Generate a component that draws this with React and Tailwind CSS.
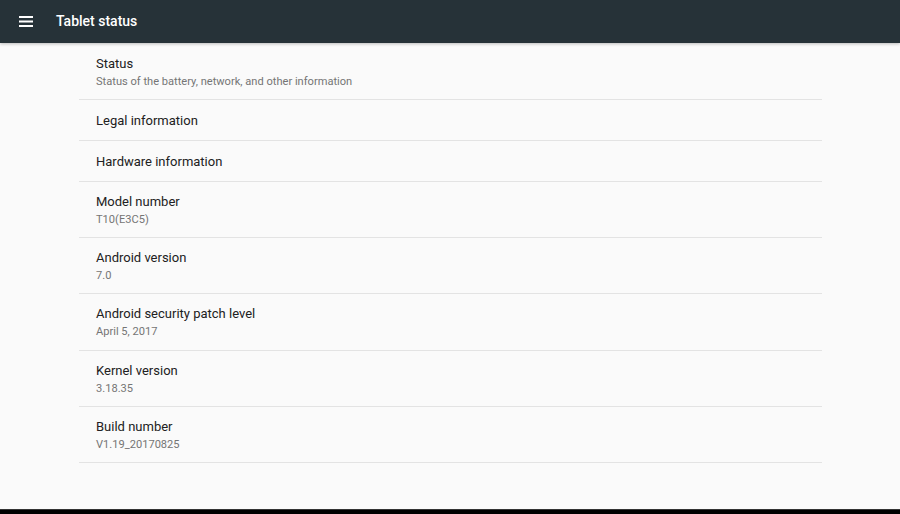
import React from 'react';

const items = [
  { title: 'Status', summary: 'Status of the battery, network, and other information' },
  { title: 'Legal information' },
  { title: 'Hardware information' },
  { title: 'Model number', summary: 'T10(E3C5)' },
  { title: 'Android version', summary: '7.0' },
  { title: 'Android security patch level', summary: 'April 5, 2017' },
  { title: 'Kernel version', summary: '3.18.35' },
  { title: 'Build number', summary: 'V1.19_20170825' },
];

function MenuIcon() {
  return (
    <svg width="14" height="11" viewBox="0 0 14 11" className="block">
      <rect x="0" y="0" width="14" height="2" fill="#fff" />
      <rect x="0" y="4.5" width="14" height="2" fill="#fff" />
      <rect x="0" y="9" width="14" height="2" fill="#fff" />
    </svg>
  );
}

export default function App() {
  return (
    <div
      className="w-[900px] h-[514px] bg-[#fafafa] flex flex-col overflow-hidden"
      style={{ fontFamily: 'Roboto, "Noto Sans", sans-serif' }}
    >
      {/* toolbar */}
      <div className="h-[43px] shrink-0 bg-[#263238] flex items-center pl-[19px] shadow-[0_1px_3px_rgba(0,0,0,0.25)] z-10">
        <MenuIcon />
        <span className="ml-[23px] text-white text-[14px] font-medium">Tablet status</span>
      </div>

      {/* list */}
      <div className="flex-1 flex flex-col pl-[79px] pr-[78px]">
        {items.map((item, i) => (
          <div
            key={item.title}
            className={
              'border-b border-[#e3e3e3] pl-[17px] pt-px flex flex-col justify-center ' +
              (item.summary ? (i === 0 ? 'h-[57px]' : 'h-[56.2px]') : 'h-[41px]')
            }
          >
            <div className="text-[#212121] text-[13px] leading-[17px]">{item.title}</div>
            {item.summary && (
              <div className="text-[#757575] text-[11.1px] leading-[15px] mt-[2px]">{item.summary}</div>
            )}
          </div>
        ))}
      </div>

      {/* bottom nav strip */}
      <div className="h-[5px] shrink-0 bg-black border-t border-[#333]" />
    </div>
  );
}
